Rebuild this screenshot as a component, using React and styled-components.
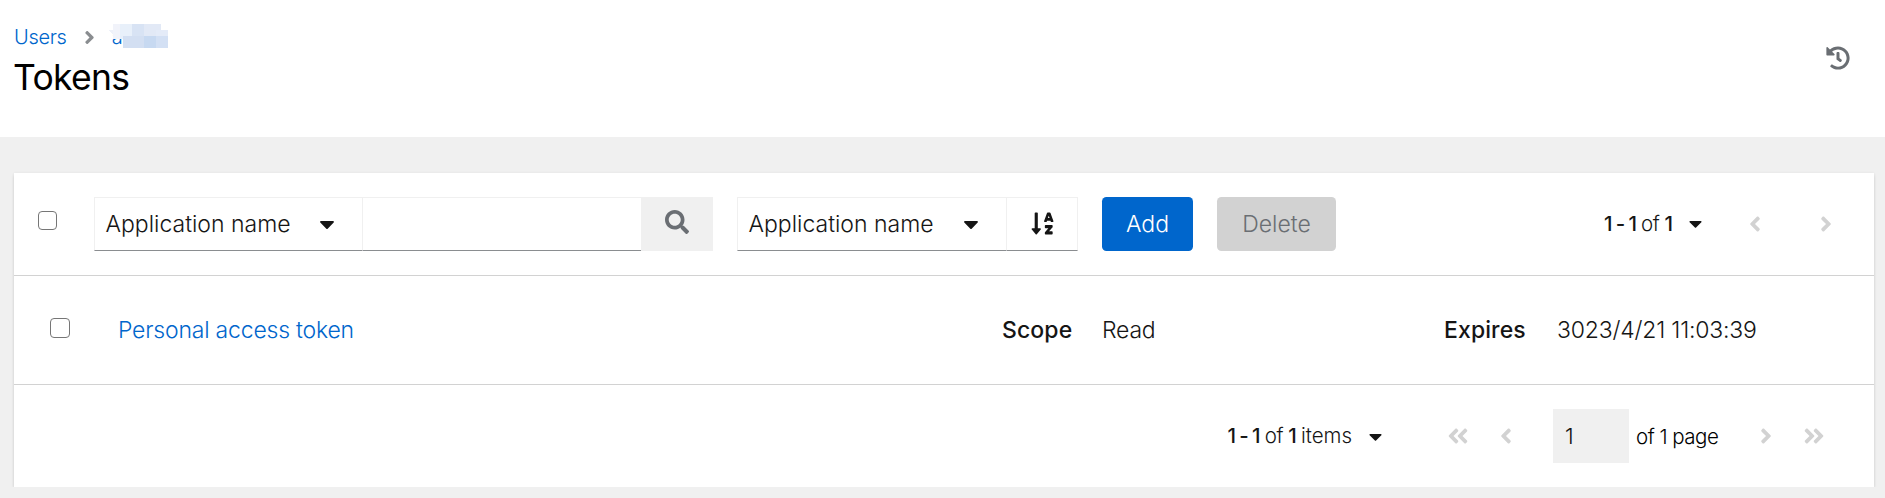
import React from 'react';
import styled, { createGlobalStyle } from 'styled-components';
import {
  FaAngleLeft, FaAngleRight, FaAngleDoubleLeft, FaAngleDoubleRight,
  FaCaretDown, FaHistory, FaSearch, FaSortAlphaDown,
} from 'react-icons/fa';

const GlobalStyle = createGlobalStyle`
  *, *::before, *::after { box-sizing: border-box; }
  body {
    margin: 0;
    background: #f0f0f0;
    color: #151515;
    font-family: Inter, "Liberation Sans", sans-serif;
    font-weight: 300;
    font-size: 23px;
    line-height: 36px;
  }
`;

const Header = styled.header`
  display: flex;
  justify-content: space-between;
  height: 137px;
  padding: 19px 35px 0 13px;
  background: #fff;
`;

const Breadcrumb = styled.nav`
  display: flex;
  align-items: center;
  height: 36px;
  padding-left: 1px;
  font-size: 20px;
`;

const Link = styled.a`
  color: #06c;
  text-decoration: none;
  letter-spacing: ${p => p.$spacing || '-0.2px'};
`;

const Divider = styled(FaAngleRight)`
  width: 21px;
  height: 21px;
  margin: 0 8px 0 12px;
  color: #8a8d90;
`;

const UserLink = styled(Link)`
  position: relative;
  width: 60px;
  padding-left: 4px;
`;

const Mask = styled.svg`
  position: absolute;
  left: 0;
  top: 5px;
  width: 60px;
  height: 24px;
`;

const Title = styled.h1`
  margin: 0;
  font-size: 35.5px;
  font-weight: 400;
  line-height: 46px;
  letter-spacing: -0.7px;
  color: #000;
`;

const HistoryIcon = styled(FaHistory)`
  width: 24px;
  height: 24px;
  margin-top: 27px;
  color: #6a6e73;
`;

const Card = styled.main`
  width: 1860px;
  height: 314px;
  margin: 36px 0 0 14px;
  background: #fff;
  box-shadow: 0 1.5px 3px rgba(3, 3, 3, 0.12), 0 0 3px rgba(3, 3, 3, 0.06);
`;

const Toolbar = styled.div`
  display: flex;
  align-items: center;
  height: 103px;
  padding: 0 25px 1px 24px;
  border-bottom: 1px solid #d2d2d2;
`;

const Checkbox = styled.input.attrs({ type: 'checkbox' })`
  appearance: none;
  flex: none;
  width: ${p => p.$size}px;
  height: ${p => p.$size}px;
  margin: 0;
  background: #fff;
  border: 1.5px solid #767676;
  border-radius: 4px;
`;

const CheckSlot = styled.div`
  width: 56px;
  padding-bottom: 6px;
  display: flex;
  align-items: center;
`;

const Group = styled.div`
  display: flex;
  margin-right: 24px;
`;

const Control = styled.div`
  display: flex;
  align-items: center;
  justify-content: ${p => (p.$center ? 'center' : 'space-between')};
  width: ${p => p.$width}px;
  height: 54px;
  padding: 0 ${p => (p.$center ? 0 : 23)}px 0 ${p => (p.$center ? 0 : 10.5)}px;
  border: 1px solid #f0f0f0;
  border-bottom-color: #8a8d90;
  ${p => p.$joined && 'border-left: 0;'}
`;

const SearchInput = styled.input`
  width: 278px;
  height: 54px;
  padding: 0 12px;
  font: inherit;
  background: #fff;
  outline: none;
  border: 0;
  border-top: 1px solid #f0f0f0;
  border-bottom: 1px solid #8a8d90;
`;

const SearchButton = styled.button`
  display: flex;
  align-items: center;
  justify-content: center;
  width: 72px;
  height: 54px;
  padding: 0 0 3px;
  border: 0;
  background: #f0f0f0;
  color: #6a6e73;
`;

const Caret = styled(FaCaretDown)`
  flex: none;
  width: ${p => p.$size || 24}px;
  height: ${p => p.$size || 24}px;
`;

const Button = styled.button`
  width: ${p => p.$width}px;
  height: 54px;
  margin-right: 24px;
  padding: 0;
  border: 0;
  border-radius: 4.5px;
  font: inherit;
  color: ${p => (p.disabled ? '#6a6e73' : '#fff')};
  background: ${p => (p.disabled ? '#d2d2d2' : '#06c')};
`;

const Pager = styled.div`
  display: flex;
  align-items: center;
  justify-content: flex-end;
  margin-left: auto;
  font-size: 20.5px;
`;

const Range = styled.span`
  margin-right: 13px;
  letter-spacing: -0.5px;
  b {
    font-weight: 500;
    letter-spacing: -1.1px;
  }
`;

const Unit = styled.span`
  letter-spacing: 0;
`;

const PageButton = styled.span`
  display: flex;
  align-items: center;
  justify-content: center;
  width: ${p => p.$width || 48}px;
  margin: 0 ${p => p.$after || 0}px 0 ${p => p.$before || 0}px;
  color: #d2d2d2;
  svg { width: 24px; height: 24px; }
`;

const Row = styled.div`
  display: grid;
  grid-template-columns: 68px 884px 100px 342px 113px 1fr;
  align-items: center;
  height: 109px;
  padding-left: 36px;
  border-bottom: 1px solid #d2d2d2;
`;

const RowCheck = styled.div`
  display: flex;
  padding-bottom: 5px;
`;

const Term = styled.span`
  font-weight: 500;
  letter-spacing: 0.1px;
`;

const Value = styled.span`
  letter-spacing: -0.2px;
`;

const Footer = styled.div`
  display: flex;
  height: 102px;
  padding: 0 36px 0 0;
`;

const PageInput = styled.input`
  width: 76px;
  height: 54px;
  margin: 0 7px 0 0;
  padding: 0 12px;
  border: 0;
  outline: none;
  background: #f0f0f0;
  color: #151515;
  font: inherit;
  font-size: 22px;
`;

const PageCount = styled.span`
  width: 106px;
  padding-top: 1px;
  color: #000;
  letter-spacing: -0.5px;
`;

export default function App() {
  return (
    <>
      <GlobalStyle />
      <Header>
        <div>
          <Breadcrumb>
            <Link href="#users" $spacing="-0.3px">Users</Link>
            <Divider />
            <UserLink href="#user">
              a
              <Mask viewBox="0 0 60 24" shapeRendering="crispEdges" aria-hidden="true">
                <path d="M0 6h6v6z" fill="#eef1f9" />
                <path d="M5 0h7v15H5z" fill="#f1f3fa" />
                <path d="M12 0h12v12H12z" fill="#e8f0fa" />
                <path d="M12 12h3v3H12z" fill="#e8f0fa" />
                <path d="M24 0h12v12H24z" fill="#d8e3f4" />
                <path d="M36 0h17v12H36z" fill="#e2e9f6" />
                <path d="M48 6h12v6H48z" fill="#e4ebf8" />
                <path d="M15 12h21v12H15z" fill="#d3dff2" />
                <path d="M36 12h12v12H36z" fill="#c7d9f1" />
                <path d="M48 12h12v12H48z" fill="#d3e0f4" />
              </Mask>
            </UserLink>
          </Breadcrumb>
          <Title>Tokens</Title>
        </div>
        <HistoryIcon />
      </Header>
      <Card>
        <Toolbar>
          <CheckSlot><Checkbox $size={19} aria-label="Select all" /></CheckSlot>
          <Group>
            <Control $width={269}>Application name<Caret /></Control>
            <SearchInput aria-label="Search" />
            <SearchButton aria-label="Search"><FaSearch size={24} /></SearchButton>
          </Group>
          <Group>
            <Control $width={270}>Application name<Caret /></Control>
            <Control $width={71} $center $joined><FaSortAlphaDown size={25} /></Control>
          </Group>
          <Button $width={91}>Add</Button>
          <Button $width={119} disabled>Delete</Button>
          <Pager>
            <Range><b>1 - 1</b> of <b>1</b></Range>
            <Caret $size={21} />
            <PageButton $width={97}><FaAngleLeft /></PageButton>
            <PageButton $width={46}><FaAngleRight /></PageButton>
          </Pager>
        </Toolbar>
        <Row>
          <RowCheck><Checkbox $size={20} aria-label="Select token" /></RowCheck>
          <Link href="#token">Personal access token</Link>
          <Term>Scope</Term>
          <Value>Read</Value>
          <Term>Expires</Term>
          <Value>3023/4/21 11:03:39</Value>
        </Row>
        <Footer>
          <Pager>
            <Range><b>1 - 1</b> of <b>1</b> <Unit>items</Unit></Range>
            <Caret $size={21} />
            <PageButton $before={48}><FaAngleDoubleLeft /></PageButton>
            <PageButton $after={23}><FaAngleLeft /></PageButton>
            <PageInput defaultValue="1" aria-label="Current page" />
            <PageCount>of 1 page</PageCount>
            <PageButton><FaAngleRight /></PageButton>
            <PageButton><FaAngleDoubleRight /></PageButton>
          </Pager>
        </Footer>
      </Card>
    </>
  );
}
